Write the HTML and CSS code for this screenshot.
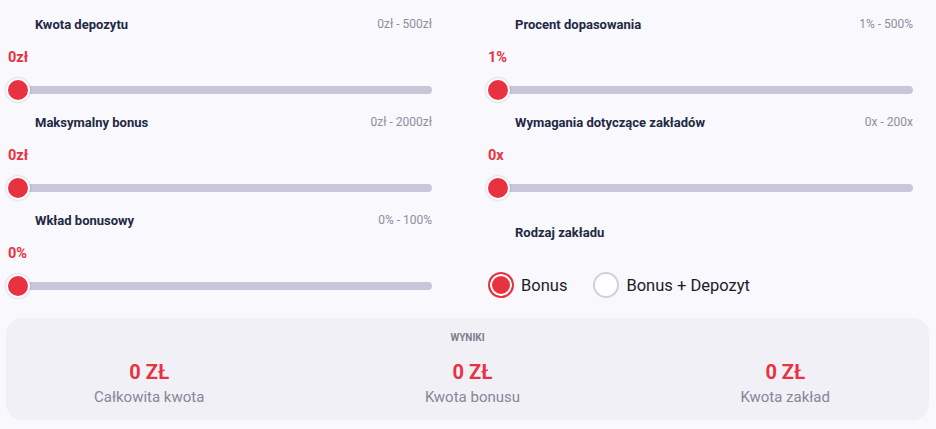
FILE: index.html
```html
<!DOCTYPE html>
<html lang="pl">
<head>
<meta charset="utf-8">
<title>Kalkulator bonusu</title>
<link rel="stylesheet" href="styles.css">
</head>
<body>
<div class="calc">
  <div class="grid">
    <div class="col">
      <div class="field">
        <div class="head"><span class="label">Kwota depozytu</span><span class="range">0zł - 500zł</span></div>
        <div class="value">0zł</div>
        <div class="track"><span class="thumb"></span></div>
      </div>
      <div class="field">
        <div class="head"><span class="label">Maksymalny bonus</span><span class="range">0zł - 2000zł</span></div>
        <div class="value">0zł</div>
        <div class="track"><span class="thumb"></span></div>
      </div>
      <div class="field">
        <div class="head"><span class="label">Wkład bonusowy</span><span class="range">0% - 100%</span></div>
        <div class="value">0%</div>
        <div class="track"><span class="thumb"></span></div>
      </div>
    </div>
    <div class="col">
      <div class="field">
        <div class="head"><span class="label">Procent dopasowania</span><span class="range">1% - 500%</span></div>
        <div class="value">1%</div>
        <div class="track"><span class="thumb"></span></div>
      </div>
      <div class="field">
        <div class="head"><span class="label">Wymagania dotyczące zakładów</span><span class="range">0x - 200x</span></div>
        <div class="value">0x</div>
        <div class="track"><span class="thumb"></span></div>
      </div>
      <div class="field">
        <div class="head head-type"><span class="label">Rodzaj zakładu</span></div>
        <div class="radios">
          <label class="radio"><span class="dot checked"></span><span>Bonus</span></label>
          <label class="radio"><span class="dot"></span><span>Bonus + Depozyt</span></label>
        </div>
      </div>
    </div>
  </div>
  <div class="results">
    <div class="results-title">WYNIKI</div>
    <div class="results-row">
      <div class="res"><div class="res-val">0 ZŁ</div><div class="res-lab">Całkowita kwota</div></div>
      <div class="res"><div class="res-val">0 ZŁ</div><div class="res-lab">Kwota bonusu</div></div>
      <div class="res"><div class="res-val">0 ZŁ</div><div class="res-lab">Kwota zakład</div></div>
    </div>
  </div>
</div>
</body>
</html>
```
FILE: styles.css
```css
html, body {
  margin: 0;
  padding: 0;
  background: #f8f8fd;
}
body {
  font-family: Roboto, "Open Sans", "Liberation Sans", sans-serif;
  color: #222944;
}
.calc {
  width: 936px;
  padding-top: 14px;
}
.grid {
  display: grid;
  grid-template-columns: 424px 425px;
  column-gap: 56px;
  padding-left: 8px;
}
.col {
  display: flex;
  flex-direction: column;
  gap: 10px;
}
.field {
  height: 88px;
  display: flex;
  flex-direction: column;
}
.head {
  display: flex;
  justify-content: space-between;
  align-items: center;
  height: 20px;
  padding-left: 27px;
}
.label {
  font-size: 13px;
  font-weight: 700;
  color: #222944;
}
.range {
  font-size: 12px;
  color: #8e8e9e;
}
.value {
  margin-top: 14px;
  height: 20px;
  line-height: 20px;
  font-size: 14.5px;
  font-weight: 700;
  color: #e8323f;
}
.track {
  position: relative;
  margin-top: 18px;
  height: 8px;
  border-radius: 4px;
  background: #cbc5d9;
}
.thumb {
  position: absolute;
  left: -2px;
  top: -8px;
  width: 20px;
  height: 20px;
  border: 2px solid #fff;
  border-radius: 50%;
  background: #e8323f;
  box-shadow: 0 0 2px rgba(60, 40, 80, 0.35);
}
.head-type {
  margin-top: 12px;
}
.radios {
  display: flex;
  align-items: center;
  gap: 26px;
  margin-top: 30px;
  height: 26px;
}
.radio {
  display: flex;
  align-items: center;
  gap: 7px;
  font-size: 16.5px;
  color: #1c1c28;
}
.dot {
  box-sizing: border-box;
  width: 26px;
  height: 26px;
  border-radius: 50%;
  border: 2px solid #d3d0de;
  background: #fff;
}
.dot.checked {
  border-color: #e8323f;
  background: #e8323f;
  box-shadow: inset 0 0 0 2px #fff;
}
.results {
  margin: 20px 7px 0 6px;
  height: 102px;
  box-sizing: border-box;
  background: #f0f0f6;
  border-radius: 16px;
  padding-top: 14px;
}
.results-title {
  text-align: center;
  font-size: 10px;
  font-weight: 700;
  line-height: 12px;
  color: #7e7e8e;
}
.results-row {
  display: flex;
  justify-content: space-between;
  padding: 0 99px 0 88px;
  margin-top: 16px;
}
.res {
  text-align: center;
}
.res-val {
  font-size: 20px;
  font-weight: 700;
  line-height: 24px;
  color: #e8323f;
}
.res-lab {
  margin-top: 3px;
  font-size: 15px;
  line-height: 20px;
  color: #868698;
}
```
